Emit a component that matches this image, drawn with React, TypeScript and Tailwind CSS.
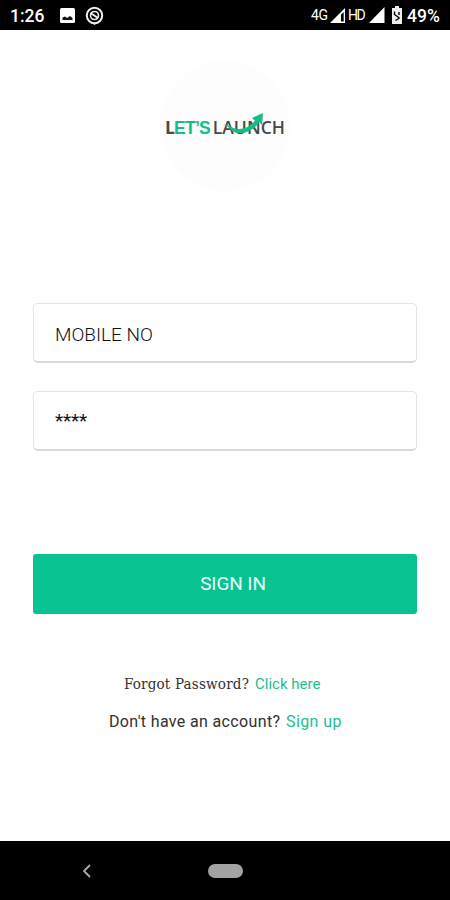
import type { ReactNode } from "react";

function StatusBar() {
  return (
    <header className="flex h-[30px] shrink-0 items-center bg-black text-white">
      <span className="ml-[10px] mt-[3px] w-[35px] whitespace-nowrap text-[17.5px] font-medium leading-none">
        1:26
      </span>
      <svg className="ml-[15px] mt-px" width="15" height="15" viewBox="0 0 15 15">
        <rect width="15" height="15" rx="1.5" fill="#fff" />
        <path d="M2.5 12V9.5L5 8.500l2 1.500L10 8l2.500 2v2z" fill="#111" />
      </svg>
      <svg className="ml-[10px]" width="19" height="19" viewBox="0 0 19 19" fill="none">
        <circle cx="9.5" cy="9.5" r="7.7" stroke="#eee" strokeWidth="2" />
        <circle cx="9.5" cy="9.5" r="4" stroke="#eee" strokeWidth="1.6" />
        <path d="m5.5 7 7.500 5" stroke="#eee" strokeWidth="2" />
        <path d="M7 17h5l-2.500 2z" fill="#eee" />
      </svg>
      <div className="ml-auto flex h-full items-center">
        <span className="w-[18px] whitespace-nowrap text-[14px] leading-none tracking-[-0.4px]">4G</span>
        <svg width="17" height="16" viewBox="0 0 17 16">
          <path d="M1 16 16 1v15z" fill="#fff" />
          <path d="M12 7.5 14.7 5v9.5H12z" fill="#000" />
        </svg>
        <span className="ml-[2px] w-[18px] whitespace-nowrap text-[14px] leading-none tracking-[-1.5px]">
          HD
        </span>
        <svg className="ml-[2px]" width="17" height="16" viewBox="0 0 17 16">
          <path d="M1 16 16.5 0v16z" fill="#fff" />
        </svg>
        <svg className="ml-[6px]" width="12" height="18" viewBox="0 0 12 18">
          <path d="M4 0h4v2h3v16H1V2h3z" fill="#eee" />
          <path d="M3.5 5.5v3l5 3.5M8 6v3M8.5 12l-4 2.5" fill="none" stroke="#000" strokeWidth="1.4" />
        </svg>
        <span className="ml-[4px] mr-[10px] mt-[3px] w-[33px] whitespace-nowrap text-[17.5px] font-medium leading-none">
          49%
        </span>
      </div>
    </header>
  );
}

function Logo() {
  return (
    <div className="mx-auto mt-[31px] flex size-[130px] items-center justify-center rounded-full bg-[#fdfdfd]">
      <div className="relative mt-[4px] flex w-[120px] items-baseline whitespace-nowrap font-['Open_Sans',sans-serif] text-[17.5px] font-semibold leading-none text-[#484848]">
        <span className="w-[9px] font-bold">L</span>
        <span className="w-[39px] font-['Liberation_Sans',sans-serif] text-[17.5px] font-bold tracking-[-0.7px] text-[#16bd8b]">
          ET’S
        </span>
        <span className="tracking-[0.05px]">LAUNCH</span>
        <svg className="absolute left-[57px] top-[-7px]" width="44" height="24" viewBox="0 0 44 24">
          <path d="M1 12c8 1 8 5 16 5 7 0 13-4 17-10l4 2c-6 9-13 13-22 12-8-1-8-7-15-9" fill="#16bd8b" />
          <path d="m30 6 11-5-1 12-3-3-5-2z" fill="#16bd8b" />
        </svg>
      </div>
    </div>
  );
}

function Field({ className, children }: { className: string; children: ReactNode }) {
  return (
    <div
      className={`${className} flex h-[60px] items-center rounded-[5px] border border-b-2 border-[#e5e5e5] border-b-[#d9d9d9] bg-white pl-[21px] text-[19px] text-[#111]`}
    >
      {children}
    </div>
  );
}

export default function App() {
  return (
    <div className="flex h-[900px] w-[450px] flex-col overflow-hidden bg-white font-[Roboto,sans-serif]">
      <StatusBar />
      <main className="flex flex-1 flex-col px-[33px]">
        <Logo />
        <Field className="mt-[112px]">
          <span className="mt-[5px] font-light">MOBILE NO</span>
        </Field>
        <Field className="mt-[28px]">
          <span className="mt-px tracking-[-0.2px]">****</span>
        </Field>
        <button className="mt-[103px] h-[60px] rounded-[3px] bg-[#08c291] pl-[16px] text-[19px] tracking-[-0.1px] text-[#e9fff8]">
          SIGN IN
        </button>
        <p className="ml-[91px] mt-[60px] flex h-5 items-center whitespace-nowrap text-[#303030]">
          <span className="w-[131px] font-['DejaVu_Serif_Condensed','DejaVu_Serif',serif] text-[15px] tracking-[0.2px]">
            Forgot Password?
          </span>
          <a className="text-[15px] text-[#22bd91]">Click here</a>
        </p>
        <p className="ml-[76px] mt-[18px] flex h-5 items-center whitespace-nowrap text-[16px] text-[#303030]">
          <span className="w-[177px] tracking-[0.35px]">Don't have an account?</span>
          <a className="tracking-[0.4px] text-[#22bd91]">Sign up</a>
        </p>
      </main>
      <nav className="flex h-[59px] shrink-0 items-center bg-black">
        <svg className="ml-[82px]" width="10" height="14" viewBox="0 0 10 14" fill="none">
          <path d="M8 1 2 7l6 6" stroke="#aaa" strokeWidth="1.8" />
        </svg>
        <div className="ml-[116px] h-[14px] w-[35px] rounded-full bg-[#a3a3a3]" />
      </nav>
    </div>
  );
}
